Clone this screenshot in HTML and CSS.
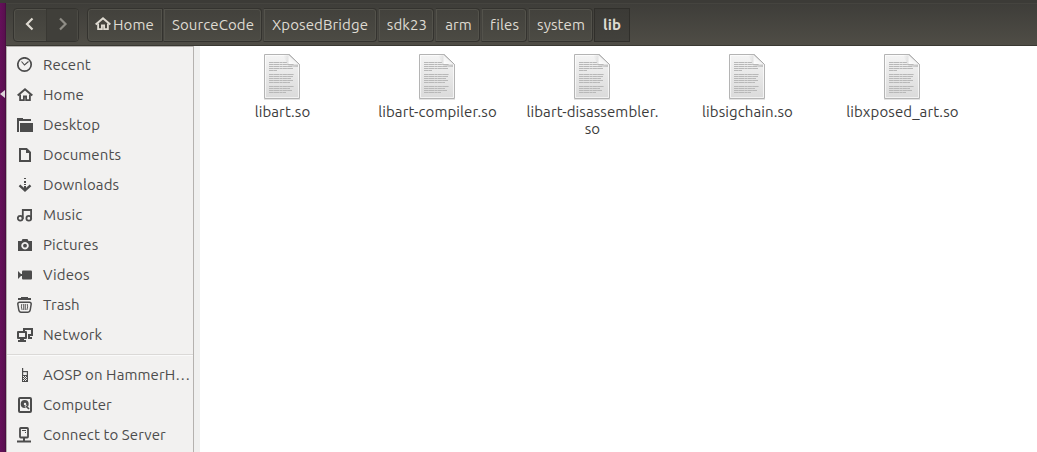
FILE: index.html
```html
<!DOCTYPE html>
<html lang="en">
<head>
<meta charset="utf-8">
<title>lib</title>
<link rel="stylesheet" href="styles.css">
</head>
<body>
<svg width="0" height="0" class="defs" aria-hidden="true">
  <defs>
    <linearGradient id="paper" x1="0" y1="0" x2="0" y2="1"><stop offset="0" stop-color="#f4f4f4"/><stop offset="1" stop-color="#dadada"/></linearGradient>
    <linearGradient id="fold" x1="0" y1="1" x2="1" y2="0"><stop offset="0" stop-color="#ffffff"/><stop offset=".5" stop-color="#f2f2f2"/><stop offset="1" stop-color="#b5b5b5"/></linearGradient>
    <linearGradient id="shade" x1="0" y1="0" x2="1" y2="0"><stop offset="0" stop-color="#999" stop-opacity="0"/><stop offset="1" stop-color="#999" stop-opacity=".5"/></linearGradient>
    <symbol id="doc" viewBox="0 0 38 48">
      <path d="M1 46.5h36" stroke="#e4e4e4"/>
      <path d="M1.500 1.500H26L36.500 11.500V45.500H1.500Z" fill="url(#paper)" stroke="#b4b4b4"/>
      <path d="M2.500 2.500H25.500M2.500 2.500V44.500H35.500V12" fill="none" stroke="#fff" opacity=".65"/>
      <path d="M20 2h6v9h9v3H26z" fill="url(#shade)"/>
      <path d="M25.500 2V11.500H36Z" fill="url(#fold)"/>
      <path d="M26 1.500L36.500 11.500" stroke="#aaa"/>
      <g stroke="#b8b8b8" stroke-dasharray="4 .3 6 .3 3 .3">
        <path d="M6 9.500h18M6 11.500h25M6 13.500h23M6 15.500h24M6 17.500h8M6 21.500h25M6 23.500h24M6 25.500h22M6 27.500h24M6 29.500h21M6 33.500h25M6 35.500h21M6 37.500h23M6 39.500h17"/>
      </g>
    </symbol>
    <symbol id="house" viewBox="0 0 16 16">
      <path d="M0.700 8.500L8 2.200l7.300 6.300" fill="none" stroke="currentColor" stroke-width="2"/>
      <path d="M3.100 7.500V13.100h3.800V9.500h2.200v3.600h3.800V7.500" fill="none" stroke="currentColor" stroke-width="1.800"/>
    </symbol>
  </defs>
</svg>
<div class="screen">
  <div class="topbar"></div>
  <div class="desktop"><svg class="marker" width="6" height="8" viewBox="0 0 6 8"><path d="M0 4L5 0V8Z" fill="#ddd3da"/></svg></div>
  <div class="window">
    <header class="toolbar">
      <div class="nav">
        <button class="nav-btn" aria-label="Back"><svg width="32" height="32" viewBox="0 0 32 32"><path d="M18.500 9.500L13 15l5.500 5.500" fill="none" stroke="#dfdbd2" stroke-width="2.200"/></svg></button>
        <button class="nav-btn off" aria-label="Forward"><svg width="32" height="32" viewBox="0 0 32 32"><path d="M13 9.500L18.500 15L13 20.500" fill="none" stroke="#8f8d86" stroke-width="2.200"/></svg></button>
      </div>
      <nav class="path">
        <button class="crumb home"><svg width="16" height="16"><use href="#house"/></svg><span>Home</span></button>
        <button class="crumb source"><span>SourceCode</span></button>
        <button class="crumb bridge"><span>XposedBridge</span></button>
        <button class="crumb sdk"><span>sdk23</span></button>
        <button class="crumb arm"><span>arm</span></button>
        <button class="crumb files"><span>files</span></button>
        <button class="crumb system"><span>system</span></button>
        <button class="crumb current"><span>lib</span></button>
      </nav>
    </header>
    <div class="body">
      <aside class="sidebar">
        <ul>
          <li><svg viewBox="0 0 16 16"><circle cx="7.500" cy="7.500" r="6.700" fill="none" stroke="currentColor" stroke-width="1.700"/><path d="M4.500 4.500L7.500 8L11.500 4.500" fill="none" stroke="currentColor" stroke-width="1.100"/></svg><span>Recent</span></li>
          <li><svg><use href="#house"/></svg><span>Home</span></li>
          <li><svg viewBox="0 0 16 16"><path d="M0 1h6v1h8v2H2v11H0Z M3 6h13v9H3Z" fill="currentColor"/></svg><span>Desktop</span></li>
          <li><svg viewBox="0 0 16 16"><path d="M3 2h6.500L13 5.500V14H3Z" fill="none" stroke="currentColor" stroke-width="2"/><path d="M9 1v5h5" fill="currentColor"/></svg><span>Documents</span></li>
          <li><svg viewBox="0 0 16 16"><path d="M7 1h2v1H7Z M7 4h2v2H7Z M7 7h2v1H7Z M7 9h2v3H7Z" fill="currentColor"/><path d="M2.500 8.300L8 13.300l5.500-5" fill="none" stroke="currentColor" stroke-width="2.400"/></svg><span>Downloads</span></li>
          <li><svg viewBox="0 0 16 16"><g fill="none" stroke="currentColor" stroke-width="1.800"><circle cx="3.200" cy="11.200" r="2.400"/><circle cx="11.800" cy="11.200" r="2.400"/><path d="M5.800 12V3h8.300v9"/></g><path d="M5 2h10v2H5Z" fill="currentColor"/></svg><span>Music</span></li>
          <li><svg viewBox="0 0 16 16"><path fill-rule="evenodd" d="M1 4h3.500l1-2h5l1 2H15v10H1Z M8 5a3.700 3.700 0 1 0 .01 0Z" fill="currentColor"/><circle cx="8" cy="8.700" r="1.900" fill="currentColor"/></svg><span>Pictures</span></li>
          <li><svg viewBox="0 0 16 16"><path d="M1 4l4 4-4 4Z" fill="currentColor"/><path d="M4 7h2v2H4Z" fill="currentColor"/><rect x="5" y="3.500" width="10" height="9" rx="1" fill="currentColor"/></svg><span>Videos</span></li>
          <li><svg viewBox="0 0 16 16"><g fill="none" stroke="currentColor"><path d="M4 .6h7" stroke-width="1.200"/><path d="M1 2h13" stroke-width="2"/><path d="M2.500 5.200H12.500Q14.200 5.200 14.200 7L13.300 12.500Q12.900 15.200 11 15.200H4Q2.100 15.200 1.700 12.500L.8 7Q.8 5.200 2.500 5.200Z" stroke-width="1.500"/><path d="M4.800 7q-1 2.800.3 6M6.700 7v6M8.300 7v6M10.200 7q1 2.800-.3 6" stroke-width=".9"/></g></svg><span>Trash</span></li>
          <li><svg viewBox="0 0 16 16"><path d="M6 1h10v8h-3v1h2v2h-4V7h3V3H8v1H6V1Z" fill="currentColor"/><path fill-rule="evenodd" d="M1 4h8q1 0 1 1v6q0 1-1 1H7v1h2v2H1v-2h2v-1H1q-1 0-1-1V5Q0 4 1 4Z M2 6v4h6V6Z" fill="currentColor"/></svg><span>Network</span></li>
        </ul>
        <ul class="devices">
          <li><svg viewBox="0 0 16 16"><path d="M5 1h1.200v3H11v11H5Z" fill="currentColor"/><path d="M6.200 5.200h3.600V8H6.200Z" fill="#f2f1f0"/><path d="M6 9.500h4M6 11.500h4M6 13.500h4" stroke="#f2f1f0" stroke-dasharray="1 1"/><path d="M7 10.500h3M7 12.500h3" stroke="#e0dfde" stroke-dasharray="1 1"/></svg><span>AOSP on HammerH…</span></li>
          <li><svg viewBox="0 0 16 16"><rect x="2" y="1" width="12" height="14" rx="1" fill="none" stroke="currentColor" stroke-width="2"/><circle cx="7.700" cy="7" r="4" fill="currentColor"/><circle cx="8" cy="7" r="1.200" fill="#f2f1f0"/><path d="M7.500 10L9 7.500l4 5" fill="#f2f1f0"/><path d="M9 9l3 3" stroke="currentColor" stroke-width="1.700"/></svg><span>Computer</span></li>
          <li><svg viewBox="0 0 16 16"><rect x="3" y="1" width="8" height="9.500" rx=".8" fill="none" stroke="currentColor" stroke-width="1.800"/><path d="M5 3.500h4M8 5.500h1" stroke="currentColor"/><path d="M7 10v4M0 14.500h14" stroke="currentColor" stroke-width="2"/></svg><span>Connect to Server</span></li>
        </ul>
      </aside>
      <main class="grid">
        <figure><svg><use href="#doc"/></svg><figcaption>libart.so</figcaption></figure>
        <figure><svg><use href="#doc"/></svg><figcaption>libart-compiler.so</figcaption></figure>
        <figure><svg><use href="#doc"/></svg><figcaption>libart-disassembler.<br>so</figcaption></figure>
        <figure><svg><use href="#doc"/></svg><figcaption>libsigchain.so</figcaption></figure>
        <figure><svg><use href="#doc"/></svg><figcaption>libxposed_art.so</figcaption></figure>
      </main>
    </div>
  </div>
</div>
</body>
</html>
```

FILE: styles.css
```css
* { box-sizing: border-box; }
body { margin: 0; font-family: Ubuntu, "Noto Sans", sans-serif; font-size: 15px; letter-spacing: .1px; color: #3c3c3c; background: #fff; }
.defs { position: absolute; }
ul, figure { margin: 0; padding: 0; list-style: none; }
button { font: inherit; letter-spacing: inherit; border: 0; padding: 0; background: none; color: inherit; }
.screen { display: grid; grid-template: 3px 449px / 6px 1fr; width: 1037px; height: 452px; overflow: hidden; }
.topbar { grid-column: 1 / 3; background: #3c3b37; }
.desktop { background: linear-gradient(90deg, #65105a, #5a0f50 75%, #430c3b); padding-top: 87px; }
.marker { display: block; }
.window { display: flex; flex-direction: column; min-width: 0; }
.toolbar { height: 43px; flex: none; display: flex; gap: 8px; padding: 5px 0 0 7px; background: linear-gradient(#3e3d39, #4f4d46); border-bottom: 1px solid #393832; box-shadow: inset 0 1px #45443f; }
.nav, .crumb { height: 34px; border: 1px solid #34332f; border-radius: 4px; background: linear-gradient(#42413c, #4c4b44); box-shadow: inset 0 0 0 1px #53524b; }
.nav { width: 66px; display: flex; overflow: hidden; }
.nav-btn { width: 32px; height: 32px; }
.nav-btn svg { display: block; }
.off { background: #403f3a; border-left: 1px solid #393833; box-shadow: inset -1px 0 #4c4b45; }
.path { display: flex; color: #dfdbd2; }
.crumb { display: flex; align-items: center; justify-content: center; margin-right: 1px; border-left-color: #44433e; border-radius: 0 4px 4px 0; white-space: nowrap; padding-bottom: 1px; }
.home { width: 76px; margin-right: 0; border-radius: 4px 0 0 4px; border-left-color: #34332f; gap: 2px; padding-right: 1px; }
.home svg { margin-top: -2px; }
.source { width: 99px; padding-left: 1px; }
.bridge { width: 114px; }
.sdk { width: 56px; padding-left: 2px; }
.arm { width: 45px; padding-left: 2px; }
.files { width: 46px; padding-left: 1px; }
.system { width: 65px; padding-left: 1px; }
.current { width: 36px; border-radius: 0; background: linear-gradient(#3b3a36, #42413c); border-color: #302f2b; box-shadow: none; font-weight: bold; }
.body { flex: 1; display: flex; min-height: 0; }
.sidebar { width: 188px; background: #f2f1f0; border: solid #b5b2af; border-width: 1px 1px 0 1px; padding-top: 3px; color: #4c4c4c; }
.sidebar li { height: 30px; padding-left: 10px; display: flex; align-items: center; gap: 10px; white-space: nowrap; }
.sidebar li span { padding-bottom: 2px; }
.sidebar li svg { width: 16px; height: 16px; flex: none; color: #4c4c4c; }
.devices { margin-top: 4px; border-top: 1px solid #dbd9d7; padding-top: 5px; box-shadow: inset 0 1px #fafafa; }
.grid { flex: 1; display: grid; grid-template-columns: repeat(5, 155px); align-content: start; padding: 7px 0 0 4px; border-left: 6px solid #f0f0ef; margin: 0; }
.grid figure { display: flex; flex-direction: column; align-items: center; gap: 2px; text-align: center; line-height: 17px; }
.grid svg { width: 38px; height: 48px; }
.grid figcaption { padding-left: 2px; }
```
